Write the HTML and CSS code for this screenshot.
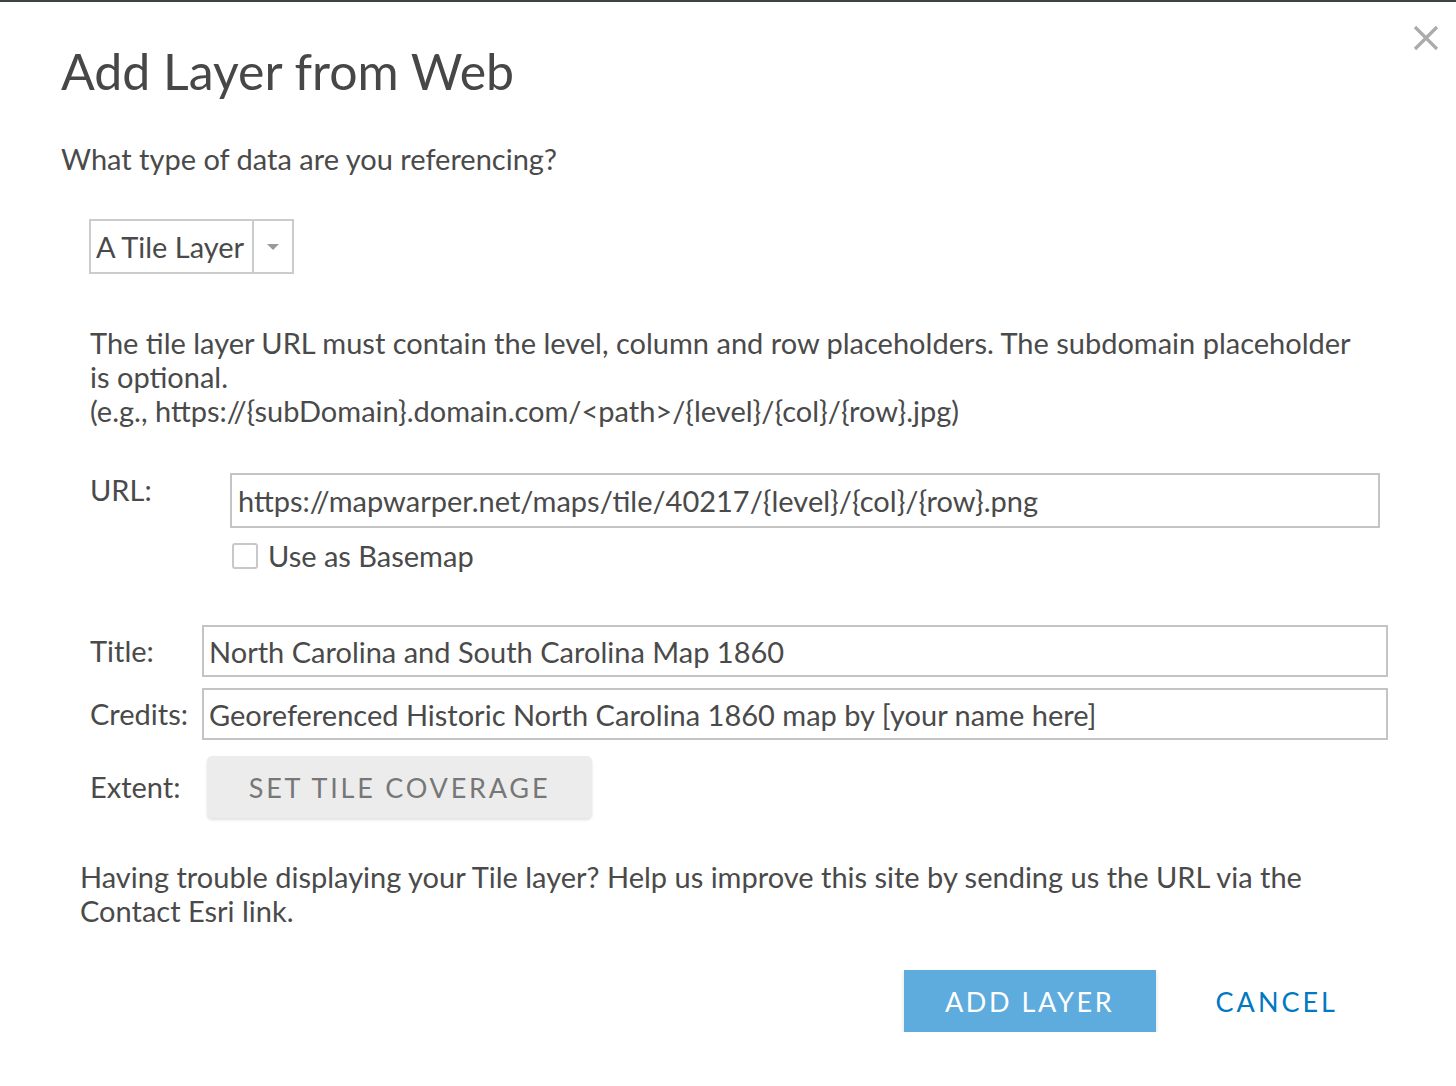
FILE: index.html
```html
<!DOCTYPE html>
<html>
<head>
<meta charset="utf-8">
<link rel="stylesheet" href="styles.css">
</head>
<body>
<div class="topline"></div>
<div class="dialog">
  <button class="close" aria-label="Close">
    <svg width="28" height="28" viewBox="0 0 28 28"><path d="M3 3 L25 25 M25 3 L3 25" stroke="#ababab" stroke-width="3.2" fill="none"/></svg>
  </button>
  <h1 class="title">Add Layer from Web</h1>
  <p class="question">What type of data are you referencing?</p>
  <div class="select">
    <span class="select-text">A Tile Layer</span>
    <span class="select-arrow"><svg width="14" height="8" viewBox="0 0 14 8"><path d="M1 1 L13 1 L7 7 Z" fill="#999"/></svg></span>
  </div>
  <div class="desc">
    <p>The tile layer URL must contain the level, column and row placeholders. The subdomain placeholder is optional.</p>
    <p>(e.g., https://{subDomain}.domain.com/&lt;path&gt;/{level}/{col}/{row}.jpg)</p>
  </div>
  <div class="row url-row">
    <span class="label url-label">URL:</span>
    <div class="url-col">
      <div class="input url-input">https://mapwarper.net/maps/tile/40217/{level}/{col}/{row}.png</div>
      <label class="check"><span class="box"></span><span>Use as Basemap</span></label>
    </div>
  </div>
  <div class="row title-row">
    <span class="label short">Title:</span>
    <div class="input wide">North Carolina and South Carolina Map 1860</div>
  </div>
  <div class="row credits-row">
    <span class="label short">Credits:</span>
    <div class="input wide">Georeferenced Historic North Carolina 1860 map by [your name here]</div>
  </div>
  <div class="row extent-row">
    <span class="label extent-label">Extent:</span>
    <button class="btn-gray">SET TILE COVERAGE</button>
  </div>
  <p class="help">Having trouble displaying your Tile layer? Help us improve this site by sending us the URL via the Contact Esri link.</p>
  <div class="actions">
    <button class="btn-primary">ADD LAYER</button>
    <button class="btn-link">CANCEL</button>
  </div>
</div>
</body>
</html>
```
FILE: styles.css
```css
html, body {
  margin: 0;
  padding: 0;
  background: #ffffff;
}
body {
  font-family: Lato, "Open Sans", sans-serif;
  color: #4a4a4a;
}
.topline {
  height: 2px;
  background: #3d4242;
}
.dialog {
  position: relative;
  padding: 0 0 0 61px;
}
.close {
  position: absolute;
  top: 22px;
  right: 16px;
  border: 0;
  background: none;
  padding: 0;
  width: 28px;
  height: 28px;
}
.title {
  margin: 0;
  padding-top: 34px;
  font-weight: 400;
  font-size: 50px;
  line-height: 70px;
  color: #474747;
}
.question {
  margin: 36px 0 0;
  font-size: 29px;
  line-height: 34px;
}
.select {
  margin: 43px 0 0 28px;
  display: inline-flex;
  height: 55px;
  box-sizing: border-box;
  border: 2px solid #cccccc;
}
.select-text {
  display: flex;
  align-items: center;
  padding: 0 8px 0 5px;
  font-size: 29px;
  border-right: 2px solid #cccccc;
}
.select-arrow {
  display: flex;
  align-items: center;
  justify-content: center;
  width: 38px;
}
.desc {
  margin: 52px 90px 0 29px;
  font-size: 29px;
  line-height: 34px;
}
.desc p { margin: 0; }
.row {
  display: flex;
  margin-left: 29px;
}
.label {
  font-size: 29px;
  line-height: 34px;
}
.url-row {
  margin-top: 45px;
}
.url-label {
  width: 140px;
  flex: none;
}
.url-col {
  display: flex;
  flex-direction: column;
}
.input {
  box-sizing: border-box;
  border: 2px solid #c4c4c4;
  font-size: 29px;
  display: flex;
  align-items: center;
  padding-left: 6px;
  white-space: nowrap;
}
.url-input {
  width: 1150px;
  height: 55px;
}
.check {
  display: flex;
  align-items: center;
  margin-top: 10px;
  font-size: 29px;
  gap: 10px;
}
.box {
  width: 26px;
  height: 26px;
  box-sizing: border-box;
  border: 2px solid #c8c8c8;
  border-radius: 3px;
  margin-left: 2px;
}
.title-row {
  margin-top: 52px;
  align-items: center;
}
.credits-row {
  margin-top: 11px;
  align-items: center;
}
.short {
  width: 112px;
  flex: none;
}
.wide {
  width: 1186px;
  height: 52px;
  padding-left: 5px;
}
.extent-row {
  margin-top: 16px;
  align-items: center;
}
.extent-label {
  width: 117px;
  flex: none;
}
.btn-gray {
  width: 385px;
  height: 62px;
  border: 0;
  border-radius: 5px;
  background: #ececec;
  box-shadow: 0 2px 3px rgba(0,0,0,0.12);
  font-family: inherit;
  font-size: 27px;
  letter-spacing: 2.8px;
  color: #777777;
}
.help {
  margin: 42px 100px 0 19px;
  font-size: 29px;
  line-height: 34px;
}
.actions {
  display: flex;
  justify-content: flex-end;
  align-items: center;
  margin-top: 42px;
  padding-right: 118px;
  gap: 60px;
}
.btn-primary {
  width: 252px;
  height: 62px;
  border: 0;
  background: #5dacdd;
  color: #ffffff;
  font-family: inherit;
  font-size: 27px;
  letter-spacing: 2.6px;
  box-shadow: 0 2px 4px rgba(0,0,0,0.15);
}
.btn-link {
  border: 0;
  background: none;
  padding: 0;
  font-family: inherit;
  font-size: 27px;
  letter-spacing: 3px;
  color: #0079c1;
}
```
